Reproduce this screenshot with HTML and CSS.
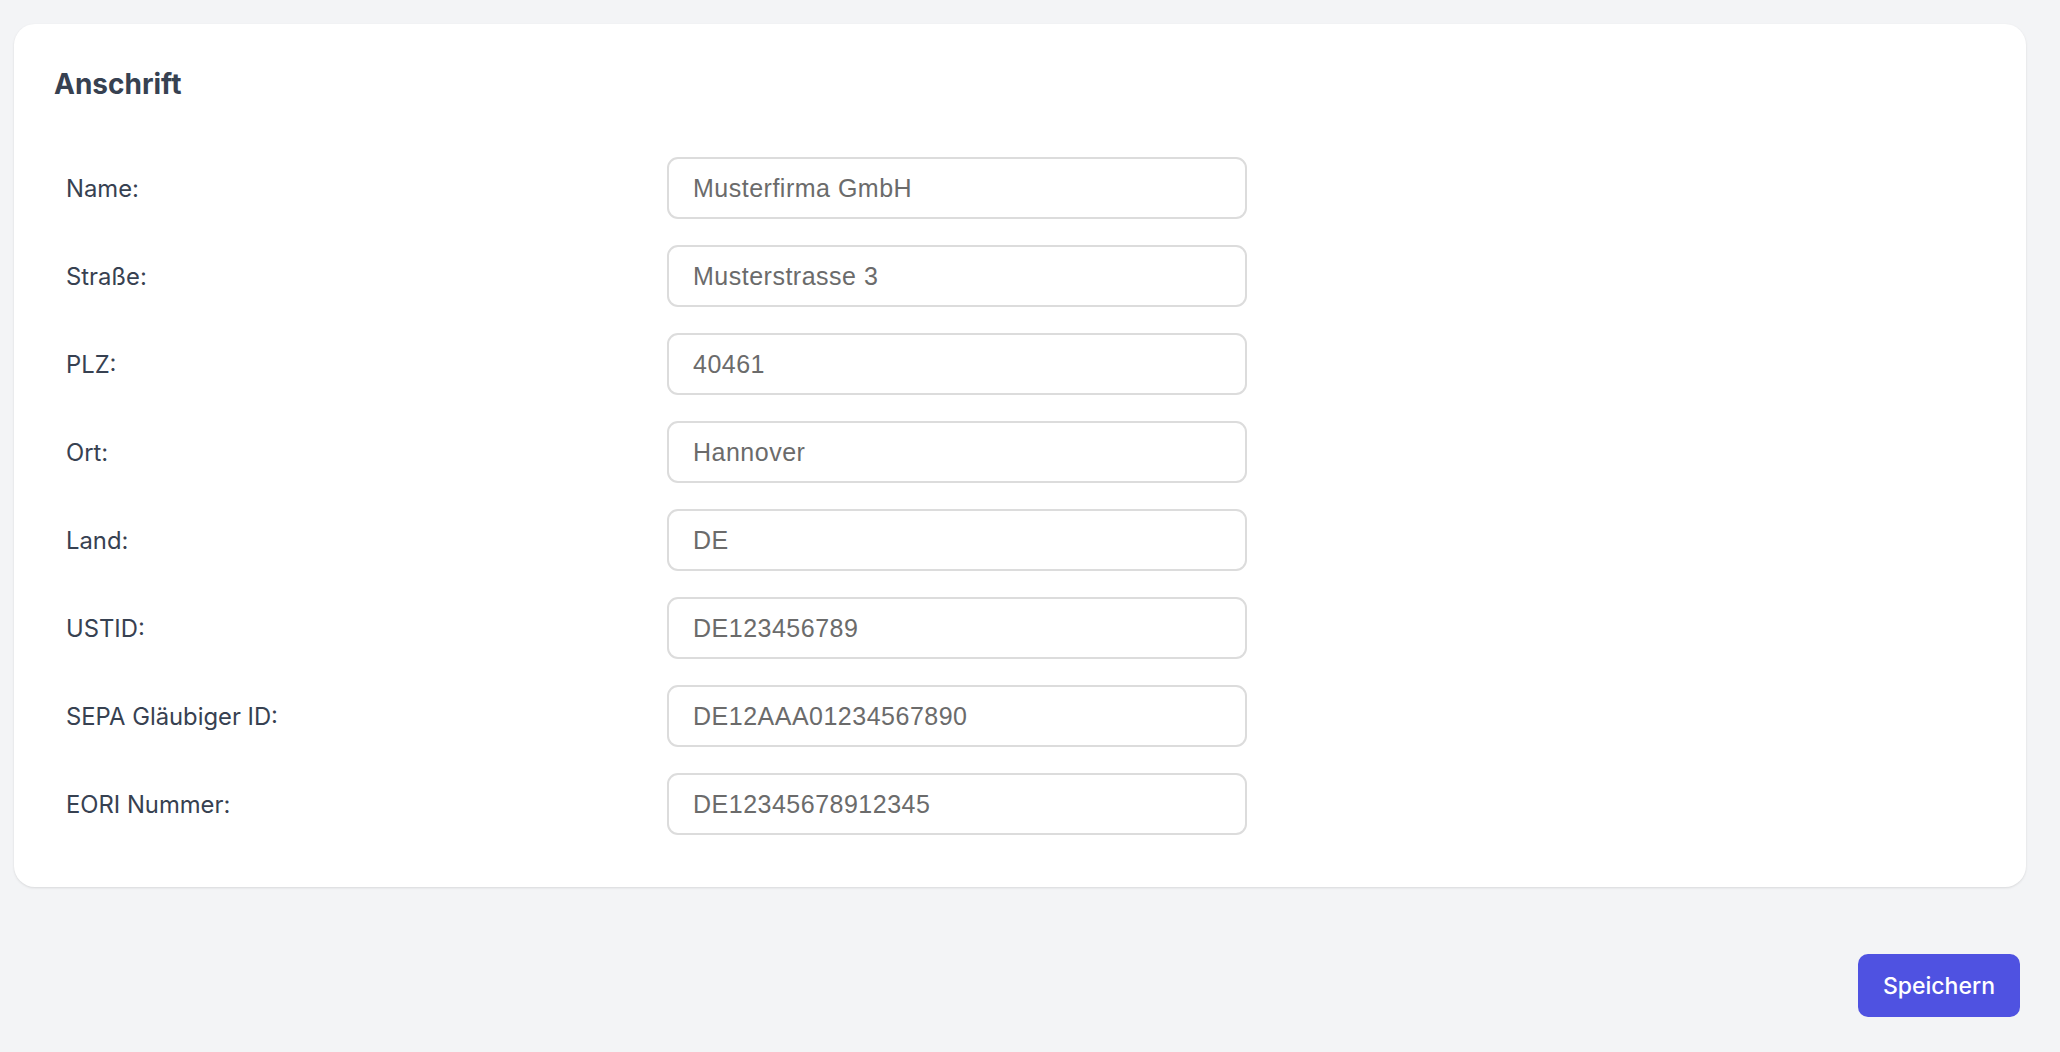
FILE: index.html
```html
<!DOCTYPE html>
<html lang="de">
<head>
<meta charset="utf-8">
<title>Anschrift</title>
<link rel="stylesheet" href="styles.css">
</head>
<body>
<main class="page">
  <section class="card">
    <h2 class="card-title">Anschrift</h2>
    <div class="form">
      <label class="label" for="f-name">Name:</label>
      <input class="input" id="f-name" type="text" value="Musterfirma GmbH">
      <label class="label" for="f-str">Straße:</label>
      <input class="input" id="f-str" type="text" value="Musterstrasse 3">
      <label class="label" for="f-plz">PLZ:</label>
      <input class="input" id="f-plz" type="text" value="40461">
      <label class="label" for="f-ort">Ort:</label>
      <input class="input" id="f-ort" type="text" value="Hannover">
      <label class="label" for="f-land">Land:</label>
      <input class="input" id="f-land" type="text" value="DE">
      <label class="label" for="f-ust">USTID:</label>
      <input class="input" id="f-ust" type="text" value="DE123456789">
      <label class="label" for="f-sepa">SEPA Gläubiger ID:</label>
      <input class="input" id="f-sepa" type="text" value="DE12AAA01234567890">
      <label class="label" for="f-eori">EORI Nummer:</label>
      <input class="input" id="f-eori" type="text" value="DE12345678912345">
    </div>
  </section>
  <div class="actions">
    <button class="btn-primary" type="button">Speichern</button>
  </div>
</main>
</body>
</html>
```
FILE: styles.css
```css
* { box-sizing: border-box; }
html, body {
  margin: 0;
  padding: 0;
  background: #f3f4f6;
  font-family: Inter, "Noto Sans", "DejaVu Sans", sans-serif;
}
.page {
  padding: 24px 34px 0 14px;
}
.card {
  background: #ffffff;
  border-radius: 21px;
  box-shadow: 0 1px 3px rgba(0, 0, 0, 0.08), 0 1px 2px rgba(0, 0, 0, 0.04);
  padding: 44px 40px 52px 40px;
}
.card-title {
  margin: 0;
  font-size: 28px;
  line-height: 32px;
  font-weight: 700;
  color: #374151;
}
.form {
  margin-top: 57px;
  display: grid;
  grid-template-columns: 613px 580px;
  row-gap: 26px;
  align-items: center;
}
.label {
  padding-left: 12px;
  font-size: 23.8px;
  color: #374151;
}
.input {
  height: 62px;
  width: 580px;
  border: 2px solid #dcdcdc;
  border-radius: 11px;
  padding: 0 24px;
  font-family: "Liberation Sans", Arial, sans-serif;
  font-size: 25px;
  letter-spacing: 0.5px;
  color: #6b6b6b;
  background: #ffffff;
  outline: none;
}
.actions {
  display: flex;
  justify-content: flex-end;
  padding-right: 6px;
  margin-top: 67px;
}
.btn-primary {
  height: 63px;
  padding: 0 25px;
  border: none;
  border-radius: 10px;
  background: #4f52e1;
  color: #ffffff;
  font-family: Inter, "Noto Sans", sans-serif;
  font-size: 23px;
  font-weight: 500;
}
```
